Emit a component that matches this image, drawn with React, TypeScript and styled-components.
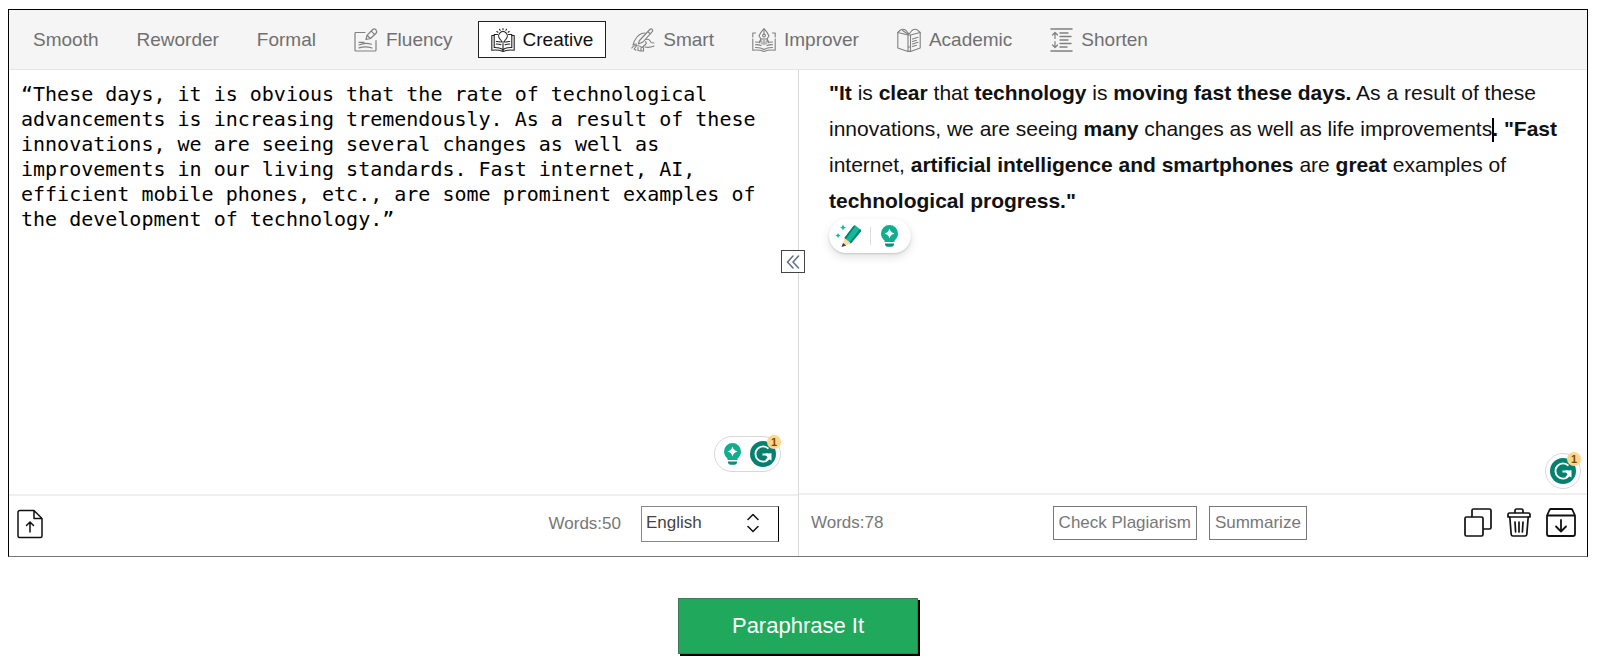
import React, { useState } from "react";
import styled, { createGlobalStyle } from "styled-components";

const GlobalStyle = createGlobalStyle`
  * { box-sizing: border-box; }
  body {
    margin: 0;
    background: #fff;
    font-family: "Liberation Sans", Arial, sans-serif;
    color: #000;
  }
  button, select, textarea { font-family: inherit; margin: 0; }
`;

const Page = styled.main`
  padding: 9px 12px 14px 8px;
`;

const Panel = styled.section`
  border: 1px solid #000;
  border-bottom-color: #777;
`;

const Toolbar = styled.nav`
  display: flex;
  flex-wrap: wrap;
  align-items: center;
  gap: 12px;
  padding: 11px 11px;
  background: #f5f5f5;
  border-bottom: 1px solid #e6e6e6;
`;

const Tab = styled.button<{ $active: boolean }>`
  display: flex;
  align-items: center;
  gap: 8px;
  height: 37px;
  padding: 0 12px;
  border: 1px solid ${(p) => (p.$active ? "#222" : "transparent")};
  background: ${(p) => (p.$active ? "#fff" : "transparent")};
  color: ${(p) => (p.$active ? "#111" : "#707070")};
  font-size: 19px;
  line-height: 24px;
  cursor: pointer;

  svg {
    color: ${(p) => (p.$active ? "#222" : "#808080")};
  }
`;

const Columns = styled.div`
  position: relative;
  display: grid;
  grid-template-columns: 1fr 1fr;
`;

const Column = styled.section<{ $divided?: boolean }>`
  display: flex;
  flex-direction: column;
  min-width: 0;
  border-left: ${(p) => (p.$divided ? "1px solid #d9d9d9" : "none")};
`;

const Editor = styled.div`
  position: relative;
  flex: 1;
  display: flex;
  flex-direction: column;
  min-height: 423px;
`;

const SourceText = styled.textarea`
  flex: 1;
  width: 100%;
  padding: 12px 16px 12px 12px;
  border: 0;
  outline: 0;
  resize: none;
  background: transparent;
  color: #000;
  font-family: "DejaVu Sans Mono", monospace;
  font-size: 20px;
  line-height: 25px;
`;

const ResultText = styled.div`
  padding: 5px 8px 0 30px;
  outline: 0;
  color: #111;
  font-size: 21px;
  line-height: 36px;
`;

const Word = styled.span<{ $changed: boolean }>`
  font-weight: ${(p) => (p.$changed ? 700 : 400)};
`;

const Caret = styled.span`
  display: inline-block;
  width: 2px;
  height: 24px;
  margin-right: -2px;
  background: #000;
  vertical-align: middle;
`;

const SuggestionPill = styled.div`
  display: flex;
  align-items: center;
  align-self: flex-start;
  gap: 9px;
  height: 34px;
  margin-left: 30px;
  padding: 0 12px 0 6px;
  border-radius: 17px;
  background: #fff;
  box-shadow: 0 1px 2px rgba(0, 0, 0, 0.14), 0 4px 10px rgba(0, 0, 0, 0.12);
`;

const PillRule = styled.span`
  width: 1px;
  height: 18px;
  background: #dedede;
`;

const IconButton = styled.button`
  display: flex;
  padding: 0;
  border: 0;
  background: none;
  color: #111;
  cursor: pointer;
`;

const AssistantDock = styled.div<{ $round?: boolean }>`
  position: absolute;
  right: ${(p) => (p.$round ? "6px" : "17px")};
  bottom: ${(p) => (p.$round ? "4px" : "22px")};
  display: flex;
  align-items: center;
  gap: 8px;
  height: 36px;
  padding: ${(p) => (p.$round ? "0 4px" : "0 4px 0 8px")};
  border: 1px solid #d5d7e4;
  border-radius: 18px;
  background: #fff;
`;

const Count = styled.span`
  position: absolute;
  top: -2px;
  right: -1px;
  width: 14px;
  height: 14px;
  border-radius: 7px;
  background: #ffd58a;
  color: #7a4a00;
  font-size: 11px;
  font-weight: 700;
  line-height: 14px;
  text-align: center;
`;

const Collapse = styled.button`
  position: absolute;
  top: 180px;
  left: 50%;
  display: flex;
  align-items: center;
  justify-content: center;
  width: 24px;
  height: 23px;
  margin-left: -17px;
  padding: 0;
  border: 1px solid #444;
  background: #fff;
  color: #66728c;
  cursor: pointer;
`;

const Footer = styled.footer<{ $height: number }>`
  display: flex;
  align-items: center;
  height: ${(p) => p.$height}px;
  padding: 0 11px 5px 12px;
  border-top: 2px solid #efefef;
  color: #777;
  font-size: 17px;
  line-height: 20px;
`;

const LeftFooter = styled(Footer)`
  justify-content: space-between;
  padding: 0 19px 4px 8px;
`;

const Group = styled.div<{ $gap: number }>`
  display: flex;
  align-items: center;
  gap: ${(p) => p.$gap}px;
`;

const WordCount = styled.span`
  color: #777;
`;

const SelectBox = styled.div`
  position: relative;
  display: flex;

  svg {
    position: absolute;
    top: 7px;
    right: 20px;
    color: #111;
    pointer-events: none;
  }
`;

const LanguageSelect = styled.select`
  appearance: none;
  width: 138px;
  height: 36px;
  padding: 0 40px 4px 4px;
  border: 1px solid #888;
  border-right-color: #000;
  border-radius: 0;
  background: #fff;
  color: #444;
  font-size: 17px;
`;

const ResultActions = styled.div`
  display: flex;
  flex: 1;
  justify-content: center;
  gap: 12px;
  padding-left: 12px;
`;

const OutlineButton = styled.button`
  height: 34px;
  padding: 0 5px;
  border: 1px solid #777;
  background: #fff;
  color: #777;
  font-size: 17px;
  line-height: 20px;
  white-space: nowrap;
  cursor: pointer;
`;

const SubmitRow = styled.div`
  display: flex;
  justify-content: center;
  padding: 41px 0 0;
`;

const Submit = styled.button`
  width: 240px;
  height: 56px;
  border: 1px solid #3b7d58;
  background: #20a95c;
  color: #fff;
  font-size: 22px;
  line-height: 26px;
  box-shadow: 2px 2px 0 #000;
  cursor: pointer;
`;

type SvgProps = { width?: number; height?: number; stroke?: number; children: React.ReactNode };

const Line = ({ width = 24, height = 24, stroke = 1, children }: SvgProps) => (
  <svg
    width={width}
    height={height}
    viewBox={`0 0 ${width} ${height}`}
    fill="none"
    stroke="currentColor"
    strokeWidth={stroke}
    strokeLinecap="round"
    strokeLinejoin="round"
    aria-hidden="true"
  >
    {children}
  </svg>
);

const FluencyIcon = () => (
  <Line stroke={1.2}>
    <path d="M11 4.500H2q-1 0-1 1v16.500q0 1 1 1h19q1 0 1-1V12.500" />
    <path d="M12 11.500l1-4.200L18.700 1.500q1.500-1.200 3.200.3 1.500 1.700.4 3.200L16.500 10.500z M17.300 3.200l3.500 3.500 M13.300 7.500l3 3" />
    <path d="M5 17q6-2.800 12.500-.8 M5 19.800q7-1.800 13 .2 M5 14.300h5" />
  </Line>
);

const CreativeIcon = () => (
  <Line stroke={1.1}>
    <path d="M10.500 14q0-1.800-1.700-3.200a4.300 4.300 0 1 1 6.400 0q-1.700 1.400-1.700 3.200z" />
    <path d="M12 .6v1.200 M8.500 1.300l.6 1 M15.500 1.300l-.6 1 M5.800 3.500l1.100.7 M18.200 3.500l-1.100.7" />
    <path d="M6.500 6.500H3.200v13q5-.200 8.800 2 3.800-2.200 8.800-2v-13h-3.300" />
    <path d="M3.200 7.500H.8V22.300q6-.8 11.200 1.100 5.200-1.900 11.200-1.100V7.500h-2.400 M12 15.500v7.500" />
    <path d="M5.300 13.500q2-.1 4 .6 M5.300 16q2.300-.1 4.700.7 M18.700 13.500q-2-.1-4 .6 M18.700 16q-2.300-.1-4.700.7" />
  </Line>
);

const SmartIcon = () => (
  <Line stroke={1.1}>
    <path d="M8.500 12.500L18.800 1.500q1.300-1.200 2.400-.2 1 1 0 2.400L12 14l-4.700 2z M17 3.800l2.500 2.200" />
    <path d="M14 5q-4.500 0-8 4-3 3.500-4 8 1.500-1 3.500-1" />
    <path d="M.8 20q1.500-2.700 4.500-2.500 3.700.3 5.700 2l3.500-3q1.500-1.800 0-2.800 M5 18.500L3.200 21l1.800 1.200 M7 19.500v3l2.500.5 M10 20v3h2.500v-3.500" />
    <path d="M14.500 11.500q3.500-1 4.500 1.300.800 2.400 4 2.200 M14 19q4.500 1 9-1" />
  </Line>
);

const ImproverIcon = () => (
  <Line stroke={1.1}>
    <path d="M12 .6q3.200 3.200 5 7.400L15 11H9L7 8Q8.800 3.800 12 .6z M12 .6V6" />
    <circle cx="12" cy="7.500" r="1.400" />
    <path d="M9 11l-1.500 2.500 2.500-.5 M15 11l1.500 2.500-2.500-.5 M12 12v4.500 M10 14.500v1.500 M14 14.500v1.500" />
    <path d="M3.500 5H.8v4 M20.500 5h2.700v4 M.8 11v11.300q6-.8 11.200 1.100 5.200-1.900 11.200-1.100V11" />
    <path d="M3.500 19.500q5-.2 8.500 2 3.500-2.200 8.500-2 M3.500 14q2.500-.2 4.500.7 M3.500 16.700q3-.2 5.500.8 M20.500 14q-2.500-.2-4.500.7 M20.500 16.700q-3-.2-5.500.8" />
  </Line>
);

const AcademicIcon = () => (
  <Line stroke={1.1}>
    <path d="M.8 4.500l10.200 2.500v16.400L.8 20z M13.500 7l9.700-2.500V20l-9.700 3.400z M11 7h2.500 M11 23.400h2.500" />
    <path d="M.8 4.500L3.500 2Q6 .3 9 2.500l3 3.500 3-3.500q2.500-2 5-.8l3.200 2.800 M5.500 2.500l6 4" />
    <path d="M15.500 11l5.500-1.700 M15.500 13.500l4-1.200 M15.500 16l5.500-1.700 M15.500 18.500l4-1.200 M11.300 19h1.900" />
  </Line>
);

const ShortenIcon = () => (
  <Line width={23} stroke={1.2}>
    <path strokeWidth="1.600" d="M1 1h21 M1 23h21" />
    <path d="M5 4.500v6 M2.500 7L5 4.500 7.500 7 M5 13.500v6 M2.500 17L5 19.500 7.500 17" />
    <path strokeWidth="1.400" d="M10 5h8 M10 8.500h11 M10 12h8 M10 15.500h11 M10 19h7" />
  </Line>
);

const BulbIcon = () => (
  <svg width="19" height="24" viewBox="0 0 19 24" aria-hidden="true">
    <path
      d="M9.500 1a8.500 8.500 0 0 1 8.500 8.500q0 4-3.500 7V18h-10v-1.500Q1 13.500 1 9.500A8.500 8.500 0 0 1 9.500 1z"
      fill="#10ad8e"
    />
    <path d="M9.500 4.500q.9 4.100 5 5-4.100.9-5 5-.9-4.100-5-5 4.100-.9 5-5z" fill="#fff" />
    <path d="M5 19.500h9v1.300q-.5 2-2.500 2h-4q-2 0-2.500-2z" fill="#0b8f78" />
  </svg>
);

const PencilIcon = () => (
  <svg width="26" height="24" viewBox="0 0 26 24" aria-hidden="true">
    <path
      d="M8 .5q.5 2.500 3 3-2.500.5-3 3-.5-2.500-3-3 2.500-.5 3-3z M3 9q.5 2 2.500 2.500-2 .5-2.500 2.500-.5-2-2.500-2.500Q2.500 11 3 9z"
      fill="#12b99a"
    />
    <path d="M9.300 14L18.500 2q1-1 2.200-.2l4.800 3.700q1 1 .2 2.200L15.800 19.500z" fill="#12b99a" />
    <path d="M9.300 14L18.500 2q1-1 2-.3L10.800 15.200z M14.500 18.500L24.800 5l.7.600q1 1 .2 2.200L15.800 19.500z" fill="#087f70" />
    <path d="M9.300 14l6.500 5.500-8.500 3.300z" fill="#ffdda0" />
    <path d="M8 19l3.200 2.500L6.500 23z" fill="#38384e" />
  </svg>
);

const GIcon = () => (
  <svg width="26" height="26" viewBox="0 0 26 26" aria-hidden="true">
    <circle cx="13" cy="13" r="13" fill="#04806f" />
    <path d="M18.500 7.700A7.600 7.600 0 1 0 18.800 18" fill="none" stroke="#fff" strokeWidth="1.900" />
    <path d="M12.500 13.500h5.500l-1.500-.2" fill="none" stroke="#fff" strokeWidth="1.900" />
    <path d="M21.500 12.300v7.200l-2.400-1.300-2.200 2-1.400-1.400 2-2.300-2.500-3.800z" fill="#fff" />
  </svg>
);

const tabs: { name: string; icon?: React.ReactNode }[] = [
  { name: "Smooth" },
  { name: "Reworder" },
  { name: "Formal" },
  { name: "Fluency", icon: <FluencyIcon /> },
  { name: "Creative", icon: <CreativeIcon /> },
  { name: "Smart", icon: <SmartIcon /> },
  { name: "Improver", icon: <ImproverIcon /> },
  { name: "Academic", icon: <AcademicIcon /> },
  { name: "Shorten", icon: <ShortenIcon /> },
];

const sourceText =
  "“These days, it is obvious that the rate of technological advancements is increasing tremendously. As a result of these innovations, we are seeing several changes as well as improvements in our living standards. Fast internet, AI, efficient mobile phones, etc., are some prominent examples of the development of technology.”";

/* Changed words are set in bold; the caret follows the run flagged with it. */
const result: { text: string; changed?: boolean; caret?: boolean }[] = [
  { text: '"It', changed: true },
  { text: " is " },
  { text: "clear", changed: true },
  { text: " that " },
  { text: "technology", changed: true },
  { text: " is " },
  { text: "moving fast these days.", changed: true },
  { text: " As a result of these innovations, we are seeing " },
  { text: "many", changed: true },
  { text: " changes as well as life improvements", caret: true },
  { text: '. "Fast', changed: true },
  { text: " internet, " },
  { text: "artificial intelligence and smartphones", changed: true },
  { text: " are " },
  { text: "great", changed: true },
  { text: " examples of " },
  { text: 'technological progress."', changed: true },
];

const Result = () => (
  <>
    {result.map((run, i) => (
      <React.Fragment key={i}>
        {run.text
          .split(/(\s+)/)
          .filter(Boolean)
          .map((word, j) =>
            word === " " ? (
              " "
            ) : (
              <Word key={j} $changed={!!run.changed}>
                {word}
              </Word>
            ),
          )}
        {run.caret && <Caret />}
      </React.Fragment>
    ))}
  </>
);

export default function App() {
  const [active, setActive] = useState("Creative");

  return (
    <Page>
      <GlobalStyle />
      <Panel>
        <Toolbar aria-label="Modes">
          {tabs.map((tab) => (
            <Tab
              key={tab.name}
              type="button"
              $active={tab.name === active}
              aria-pressed={tab.name === active}
              onClick={() => setActive(tab.name)}
            >
              {tab.icon}
              {tab.name}
            </Tab>
          ))}
        </Toolbar>
        <Columns>
          <Column>
            <Editor>
              <SourceText aria-label="Original text" spellCheck={false} defaultValue={sourceText} />
              <AssistantDock>
                <BulbIcon />
                <GIcon />
                <Count>1</Count>
              </AssistantDock>
            </Editor>
            <LeftFooter $height={62}>
              <IconButton type="button" aria-label="Upload file">
                <Line width={26} height={30} stroke={1.5}>
                  <path d="M3 1.500h14l8 8V27q0 1.500-1.500 1.500H2.500Q1 28.500 1 27V3.500q0-2 2-2z M17 1.500v8h8" />
                  <path d="M13 23V13 M9.500 16.500L13 13l3.500 3.500" />
                </Line>
              </IconButton>
              <Group $gap={20}>
                <WordCount>Words:50</WordCount>
                <SelectBox>
                  <LanguageSelect aria-label="Language" defaultValue="English">
                    <option>English</option>
                  </LanguageSelect>
                  <Line width={12} height={20} stroke={1.5}>
                    <path d="M1 6.500l5-5 5 5 M1 13.500l5 5 5-5" />
                  </Line>
                </SelectBox>
              </Group>
            </LeftFooter>
          </Column>
          <Column $divided>
            <Editor>
              <ResultText role="textbox" aria-label="Paraphrased text" aria-multiline="true">
                <Result />
              </ResultText>
              <SuggestionPill>
                <PencilIcon />
                <PillRule />
                <IconButton type="button" aria-label="Suggestions">
                  <BulbIcon />
                </IconButton>
              </SuggestionPill>
              <AssistantDock $round>
                <GIcon />
                <Count>1</Count>
              </AssistantDock>
            </Editor>
            <Footer $height={63}>
              <WordCount>Words:78</WordCount>
              <ResultActions>
                <OutlineButton type="button">Check Plagiarism</OutlineButton>
                <OutlineButton type="button">Summarize</OutlineButton>
              </ResultActions>
              <Group $gap={15}>
                <IconButton type="button" aria-label="Copy">
                  <Line width={28} height={30} stroke={1.7}>
                    <path d="M2.500 9h15q1.500 0 1.500 1.500v16q0 1.500-1.500 1.500h-15Q1 28 1 26.500v-16Q1 9 2.500 9z" />
                    <path d="M8 8.500V2.500Q8 1 9.500 1h16Q27 1 27 2.500v17q0 1.500-1.500 1.500H20" />
                  </Line>
                </IconButton>
                <IconButton type="button" aria-label="Delete">
                  <Line width={24} height={30} stroke={1.7}>
                    <path d="M2.500 5h19q1.500 0 1.500 2v2H1V7q0-2 1.500-2z M8 5V2.500Q8 1 9.500 1h5Q16 1 16 2.500V5" />
                    <path d="M2.800 9l1.400 17.500q.2 1.500 1.800 1.500h12q1.600 0 1.800-1.500L21.200 9 M8 14l.6 10 M12 14v10 M16 14l-.6 10" />
                  </Line>
                </IconButton>
                <IconButton type="button" aria-label="Download">
                  <Line width={30} height={30} stroke={1.8}>
                    <path d="M1 7.500h28v18.500q0 2-2 2H3q-2 0-2-2z M1 7.500L3.500 2q.5-1 1.500-1h20q1 0 1.500 1L29 7.500" />
                    <path d="M15 12v11 M10 18.500l5 5 5-5" />
                  </Line>
                </IconButton>
              </Group>
            </Footer>
          </Column>
          <Collapse type="button" aria-label="Collapse">
            <Line width={14} height={14} stroke={1.6}>
              <path d="M7 1L1.500 7 7 13 M12.500 1L7 7l5.500 6" />
            </Line>
          </Collapse>
        </Columns>
      </Panel>
      <SubmitRow>
        <Submit type="button">Paraphrase It</Submit>
      </SubmitRow>
    </Page>
  );
}
